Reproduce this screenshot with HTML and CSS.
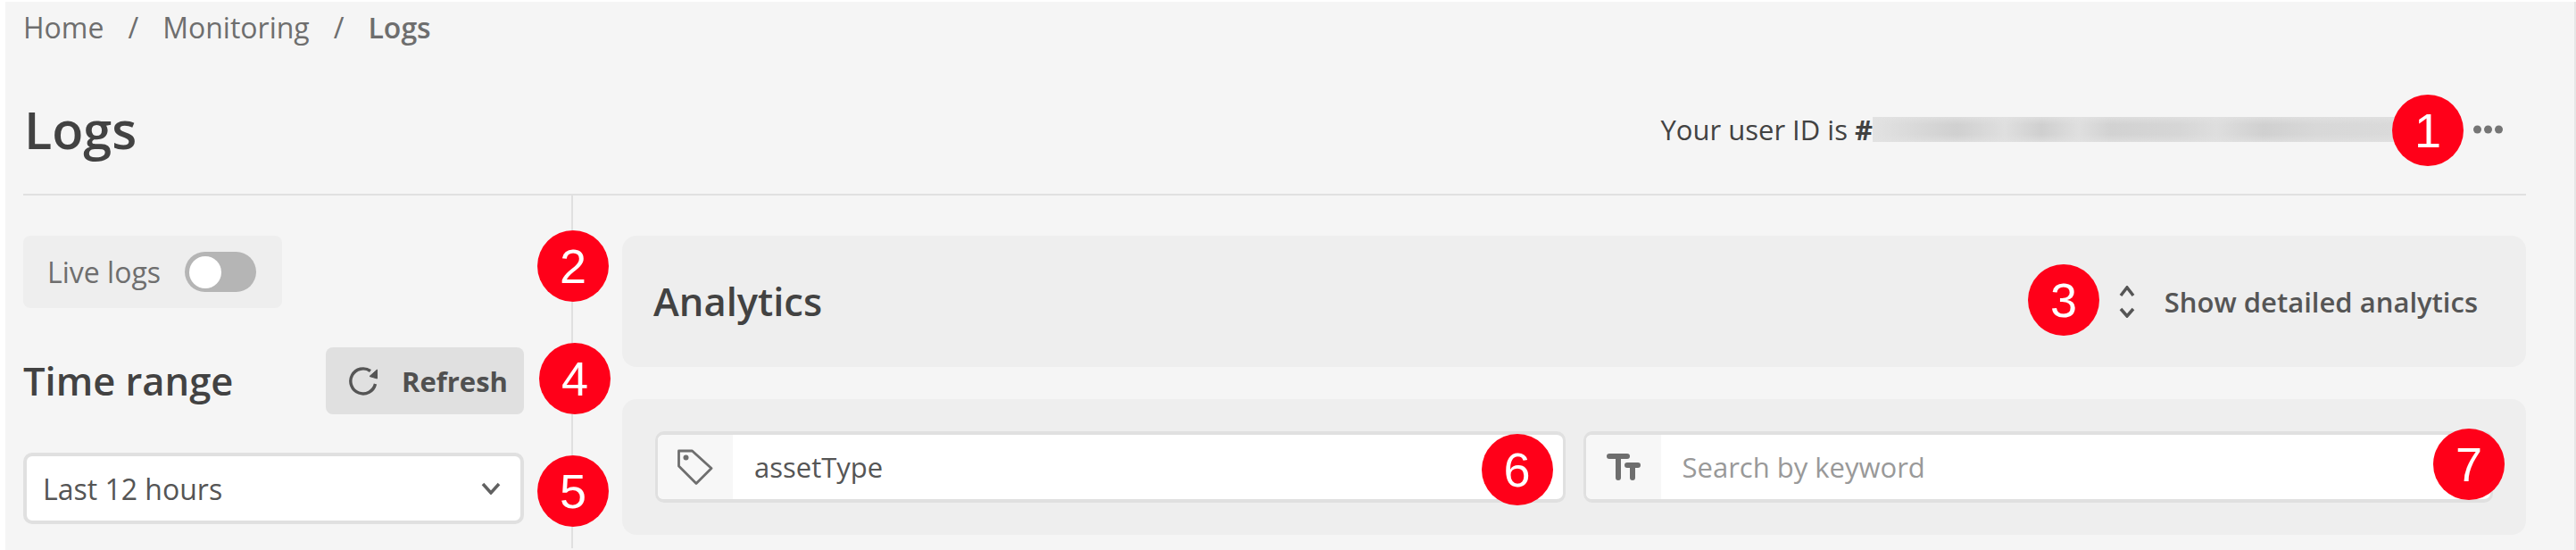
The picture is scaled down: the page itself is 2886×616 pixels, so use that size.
FILE: index.html
```html
<!DOCTYPE html>
<html lang="en">
<head>
  <meta charset="UTF-8">
  <title>Logs</title>
  <link rel="stylesheet" href="styles.css">
</head>
<body>
  <div class="page">
    <div class="breadcrumb">
      <span>Home</span><span class="sep">/</span><span>Monitoring</span><span class="sep">/</span><strong>Logs</strong>
    </div>

    <header class="title-bar">
      <h1>Logs</h1>
      <div class="user-id">
        <span>Your user ID is <b>#</b></span>
        <span class="blurred"></span>
        <svg class="dots" viewBox="0 0 33 10"><circle cx="4.500" cy="5" r="4.500"/><circle cx="16.500" cy="5" r="4.500"/><circle cx="28.500" cy="5" r="4.500"/></svg>
      </div>
      <span class="badge badge-1">1</span>
    </header>

    <div class="content">
      <aside class="sidebar">
        <div class="live-logs">
          <span>Live logs</span>
          <span class="toggle"><span class="knob"></span></span>
        </div>
        <div class="range-head">
          <h2>Time range</h2>
          <button class="refresh">
            <svg viewBox="0 0 32 32"><path d="M24 4.500A14 14 0 1 0 29.500 19" fill="none" stroke="#555" stroke-width="3.400"/><path d="M23 10.500l8.500 2.500V3z" fill="#555" stroke="#555" stroke-linejoin="round"/></svg>
            Refresh
          </button>
        </div>
        <div class="select">
          <span>Last 12 hours</span>
          <svg viewBox="0 0 22 14"><path d="M2 2l9 10 9-10" fill="none" stroke="#616161" stroke-width="3.500"/></svg>
        </div>
        <span class="badge badge-2">2</span>
        <span class="badge badge-4">4</span>
        <span class="badge badge-5">5</span>
      </aside>

      <main class="main">
        <section class="analytics">
          <h2>Analytics</h2>
          <div class="show-more">
            <svg viewBox="0 0 18 36"><path d="M2 11l7-9 7 9M2 26l7 8 7-8" fill="none" stroke="#555" stroke-width="3.500"/></svg>
            <span>Show detailed analytics</span>
          </div>
          <span class="badge badge-3">3</span>
        </section>

        <section class="filters">
          <div class="field">
            <span class="addon">
              <svg class="tag" viewBox="0 0 40 40"><path d="M1.500 2h15L38 21.500 21 38.500 1.500 19z" fill="none" stroke="#6e6e6e" stroke-width="2.800" stroke-linejoin="round"/><circle cx="9.500" cy="9.500" r="3" fill="#6e6e6e"/></svg>
            </span>
            <span class="value">assetType</span>
            <span class="badge badge-6">6</span>
          </div>
          <div class="field">
            <span class="addon">
              <svg class="tt" viewBox="0 0 38 30"><path d="M3 3h20M13 3v24M23 13h12M29 13v14" fill="none" stroke="#6e6e6e" stroke-width="6" stroke-linecap="round"/></svg>
            </span>
            <span class="value placeholder">Search by keyword</span>
            <span class="badge badge-7">7</span>
          </div>
        </section>
      </main>
    </div>
  </div>
</body>
</html>
```

FILE: styles.css
```css
* {
  margin: 0;
  padding: 0;
  box-sizing: border-box;
}
body {
  background: #fff;
  font-family: "Open Sans", sans-serif;
  color: #424242;
  overflow: hidden;
}
.page {
  position: relative;
  height: 614px;
  margin: 2px 0 0 6px;
  padding: 0 54px 0 20px;
  background: #f5f5f5;
  border-right: 2px solid #e6e6e6;
}
/* Breadcrumb */
.breadcrumb {
  display: flex;
  height: 58px;
  padding-top: 7px;
  font-size: 32px;
  line-height: 44px;
  color: #6e6e6e;
}
.breadcrumb .sep {
  margin: 0 27px;
}
.breadcrumb strong {
  font-weight: 600;
}
/* Title */
.title-bar {
  position: relative;
  display: flex;
  justify-content: space-between;
  align-items: center;
  height: 159px;
  padding-top: 12px;
  border-bottom: 2px solid #e0e0e0;
}
h1 {
  font-size: 57.500px;
  font-weight: 600;
  line-height: 76px;
  margin-left: 1px;
}
.user-id {
  display: flex;
  align-items: center;
  font-size: 31px;
  margin-right: 26px;
}
.user-id b {
  font-weight: 700;
}
.blurred {
  width: 592px;
  height: 28px;
  background:
    linear-gradient(180deg, rgba(226, 226, 226, 0.7), rgba(226, 226, 226, 0) 30%, rgba(226, 226, 226, 0) 70%, rgba(226, 226, 226, 0.7)),
    linear-gradient(90deg, #e2e2e2, #d0d0d0 16%, #dfdfdf 25%, #cfcfcf 32%, #dfdfdf 39%, #d2d2d2 45%, #d6d6d6 58%, #dedede 65%, #d0d0d0 74%, #d8d8d8 84%, #dadada 100%);
}
.dots {
  width: 33px;
  height: 10px;
  margin-left: 81px;
  fill: #757575;
}
/* Columns */
.content {
  display: flex;
  height: 395px;
}
.sidebar {
  position: relative;
  flex-shrink: 0;
  width: 616px;
  padding-top: 45px;
  border-right: 2px solid #e0e0e0;
}
.live-logs {
  display: flex;
  align-items: center;
  gap: 27px;
  width: 290px;
  height: 81px;
  padding-left: 27px;
  background: #eee;
  border-radius: 8px;
  font-size: 32px;
  font-weight: 500;
  color: #6e6e6e;
}
.toggle {
  width: 80px;
  height: 45px;
  padding: 5px;
  background: #b5b5b5;
  border-radius: 23px;
}
.knob {
  display: block;
  width: 36px;
  height: 36px;
  background: #fff;
  border-radius: 50%;
}
.range-head {
  display: flex;
  justify-content: space-between;
  align-items: center;
  width: 561px;
  margin-top: 44px;
}
.range-head h2 {
  font-size: 43.500px;
  font-weight: 600;
}
.refresh {
  display: flex;
  align-items: center;
  gap: 27px;
  width: 222px;
  height: 75px;
  padding-left: 26px;
  background: #e0e0e0;
  border: 0;
  border-radius: 8px;
  font: 700 31px "Open Sans", sans-serif;
  color: #505050;
}
.refresh svg {
  width: 32px;
  height: 32px;
}
.select {
  display: flex;
  justify-content: space-between;
  align-items: center;
  width: 561px;
  height: 80px;
  margin-top: 43px;
  padding: 0 22px 0 18px;
  background: #fff;
  border: 4px solid #e0e0e0;
  border-radius: 10px;
  font-size: 32px;
  font-weight: 500;
  color: #555;
}
.select svg {
  width: 22px;
  height: 14px;
}
.main {
  flex: 1;
  padding: 45px 0 0 55px;
}
.analytics {
  position: relative;
  display: flex;
  justify-content: space-between;
  align-items: center;
  height: 147px;
  padding: 0 54px 0 35px;
  background: #eee;
  border-radius: 16px;
}
.analytics h2 {
  font-size: 43.500px;
  font-weight: 600;
}
.show-more {
  display: flex;
  align-items: center;
  gap: 33px;
  font-size: 31px;
  font-weight: 600;
  color: #555;
}
.show-more svg {
  width: 18px;
  height: 36px;
}
.filters {
  display: flex;
  gap: 20px;
  height: 152px;
  margin-top: 36px;
  padding: 36px 37px;
  background: #eee;
  border-radius: 16px;
}
.field {
  position: relative;
  display: flex;
  flex: 1;
  align-items: center;
  height: 80px;
  background: #fff;
  border: 4px solid #e0e0e0;
  border-width: 4px 3px;
  border-radius: 10px;
  font-size: 31px;
}
.addon {
  display: flex;
  align-items: center;
  justify-content: center;
  width: 84px;
  height: 100%;
  background: #f7f7f7;
  border-radius: 6px 0 0 6px;
}
.tag {
  width: 40px;
  height: 40px;
}
.tt {
  width: 38px;
  height: 30px;
}
.value {
  padding-left: 24px;
  color: #555;
}
.placeholder {
  color: #999;
}
/* Numbered callouts */
.badge {
  position: absolute;
  display: flex;
  align-items: center;
  justify-content: center;
  width: 80px;
  height: 80px;
  background: #ff0019;
  border-radius: 50%;
  font-family: "Liberation Sans", sans-serif;
  font-size: 54px;
  color: #fff;
}
.badge-1 { right: 70px; top: 46px; }
.badge-2 { right: -42px; top: 39px; }
.badge-3 { left: 1575px; top: 32px; }
.badge-4 { right: -44px; top: 165px; }
.badge-5 { right: -42px; top: 291px; }
.badge-6 { right: 11px; top: -1px; }
.badge-7 { right: -16px; top: -7px; }
```
